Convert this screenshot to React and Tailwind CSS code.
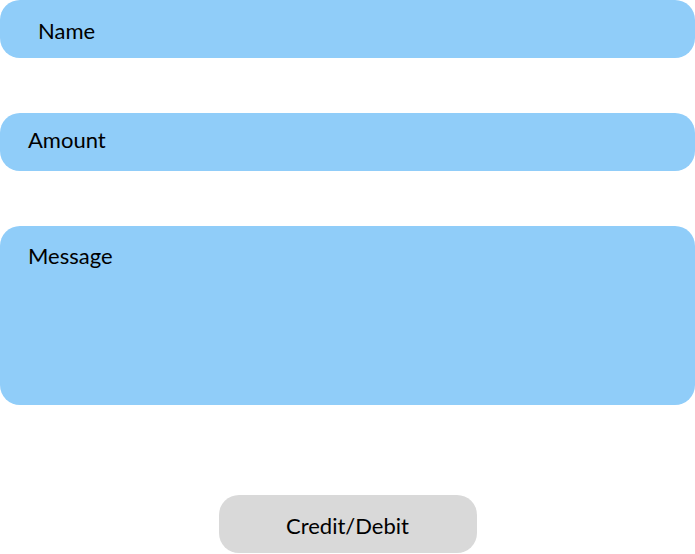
export default function App() {
  return (
    <div className="w-[695px] h-[554px] bg-white font-['Lato','Liberation_Sans',sans-serif] text-[22px] text-black flex flex-col">

      {/* NAME */}
      <div className="h-[58px] rounded-[20px] bg-[#90cdf9] pl-[38px] pt-[18px] leading-[26px]">
        Name
      </div>

      {/* AMOUNT */}
      <div className="mt-[55px] h-[58px] rounded-[20px] bg-[#90cdf9] pl-[28px] pt-[14px] leading-[26px]">
        Amount
      </div>

      {/* MESSAGE */}
      <div className="mt-[55px] h-[179px] rounded-[20px] bg-[#90cdf9] pl-[28px] pt-[17px] leading-[26px]">
        Message
      </div>

      {/* BUTTON */}
      <div className="mt-[90px] flex justify-center">
        <button className="w-[258px] h-[58px] rounded-[20px] bg-[#d9d9d9] leading-[26px] pt-[3px]">
          Credit/Debit
        </button>
      </div>

    </div>
  );
}
